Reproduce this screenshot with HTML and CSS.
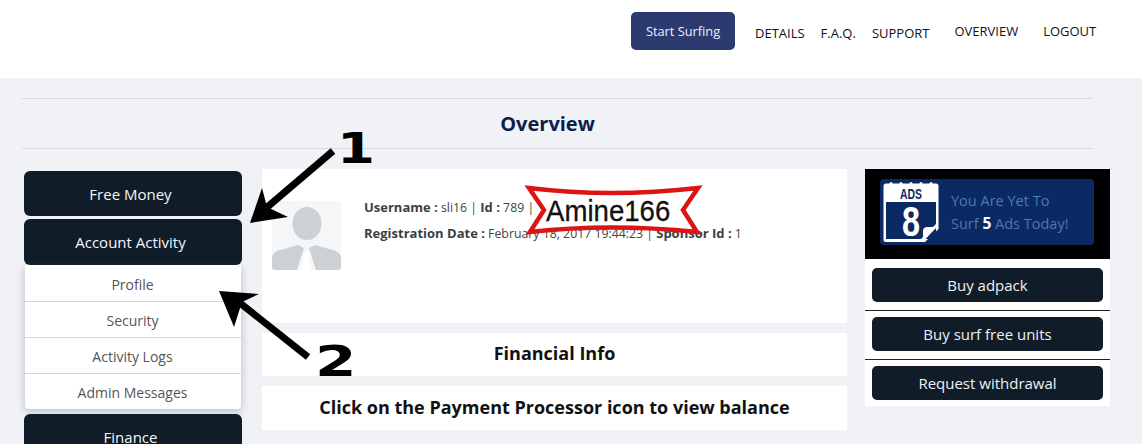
FILE: index.html
```html
<!DOCTYPE html>
<html lang="en">
<head>
<meta charset="utf-8">
<title>Overview</title>
<link rel="stylesheet" href="styles.css">
</head>
<body>
<header class="topbar">
  <a class="surf-btn">Start Surfing</a>
  <nav class="nav-low">
    <a class="nav-details">DETAILS</a>
    <a class="nav-faq">F.A.Q.</a>
    <a class="nav-support">SUPPORT</a>
  </nav>
  <nav class="nav-high">
    <a class="nav-overview">OVERVIEW</a>
    <a>LOGOUT</a>
  </nav>
</header>
<main class="page">
  <h1 class="title">Overview</h1>
  <div class="cols">
    <aside class="side">
      <a class="side-btn">Free Money</a>
      <a class="side-btn side-btn-open">Account Activity</a>
      <ul class="submenu">
        <li>Profile</li>
        <li>Security</li>
        <li>Activity Logs</li>
        <li>Admin Messages</li>
      </ul>
      <a class="side-btn side-btn-last">Finance</a>
    </aside>
    <section class="center">
      <div class="card profile">
        <svg class="avatar" viewBox="0 0 69 69" aria-hidden="true">
          <rect width="69" height="69" rx="3" fill="#f5f6f8"/>
          <ellipse cx="35" cy="22.500" rx="14.500" ry="16.500" fill="#cdd1d6"/>
          <path d="M0 57c0-3 2-5 5-7l21-6 6 3-7 22H3a3 3 0 0 1-3-3zM69 57c0-3-2-5-5-7l-21-6-6 3 7 22h22a3 3 0 0 0 3-3z" fill="#cdd1d6"/>
          <path d="M35 50l3 3-1 5 3 11H29l3-11-1-5z" fill="#fff"/>
        </svg>
        <div class="info">
          <p><b>Username :</b> sli16 | <b>Id :</b> 789 |</p>
          <p><b>Registration Date :</b> February 18, 2017 19:44:23 | <b>Sponsor Id :</b> 1</p>
        </div>
      </div>
      <div class="card band band-fin">Financial Info</div>
      <div class="card band band-click">Click on the Payment Processor icon to view balance</div>
    </section>
    <aside class="right">
      <div class="ad-box">
        <div class="ad-banner">
          <svg class="ad-icon" viewBox="0 0 56 60" aria-hidden="true">
            <path d="M3 1.500h50a2.500 2.500 0 0 1 2.500 2.500v43L42 60H3a2.500 2.500 0 0 1-2.500-2.500V4A2.500 2.500 0 0 1 3 1.500z" fill="#fff"/>
            <rect x="3" y="20" width="50" height="37" fill="#0b2a63"/>
            <path d="M53 45 40 60V50a4 4 0 0 1 4-5z" fill="#fff"/>
            <path d="M38 57h4l11-11v-4L38 57z" fill="#fff"/>
            <g fill="#fff"><circle cx="8" cy="1.500" r="1.500"/><circle cx="18" cy="1.500" r="1.500"/><circle cx="28" cy="1.500" r="1.500"/><circle cx="38" cy="1.500" r="1.500"/><circle cx="48" cy="1.500" r="1.500"/></g>
            <text x="17" y="17" class="ad-icon-top" textLength="22" lengthAdjust="spacingAndGlyphs">ADS</text>
            <text x="19" y="54" class="ad-icon-num" textLength="18" lengthAdjust="spacingAndGlyphs">8</text>
          </svg>
          <p class="ad-text">You Are Yet To<br>Surf <b>5</b> Ads Today!</p>
        </div>
      </div>
      <div class="action-panel">
        <div class="action"><a class="action-btn">Buy adpack</a></div>
        <div class="action"><a class="action-btn">Buy surf free units</a></div>
        <div class="action"><a class="action-btn">Request withdrawal</a></div>
      </div>
    </aside>
  </div>
</main>
<svg class="marks" viewBox="0 0 1142 444" aria-hidden="true">
  <path d="M333 151 265 209" stroke="#000" stroke-width="7" fill="none"/>
  <path d="M250 223 262 188 267 207 288 217z" fill="#000"/>
  <path d="M308 357 240 303" stroke="#000" stroke-width="7" fill="none"/>
  <path d="M219 291 259 294 242 302 234 327z" fill="#000"/>
  <path d="M529 188Q610 198 698 188L683 210 697 232Q610 223 530 232L544 210z" fill="#fff" stroke="#dc1414" stroke-width="4.500"/>
</svg>
<span class="mark-num mark-one">1</span>
<span class="mark-num mark-two">2</span>
<span class="stamp">Amine166</span>
</body>
</html>
```
FILE: styles.css
```css
* { box-sizing: border-box; }
html, body { margin: 0; height: 444px; overflow: hidden; }
body { position: relative; background: #f0f2f6; font-family: "Open Sans", "Liberation Sans", sans-serif; color: #333; }
a { display: block; }

.topbar { height: 78px; background: #fff; display: flex; align-items: flex-start; padding-left: 631px; }
.surf-btn { width: 104px; height: 38px; margin-top: 12px; background: #2b3b70; color: #eef; border-radius: 5px; font-size: 12.800px; line-height: 38px; text-align: center; }
.nav-low, .nav-high { display: flex; font-size: 13px; line-height: 17px; color: #111; }
.nav-low { margin: 25px 0 0 20px; }
.nav-faq { margin-left: 16px; }
.nav-support { margin-left: 16px; }
.nav-high { margin: 23px 0 0 25px; }
.nav-overview { margin-right: 25px; }

.page { padding: 20px 49px 0 22px; }
.title { margin: 0; height: 51px; padding-right: 20px; border-top: 1px solid #d8dbe2; border-bottom: 1px solid #d8dbe2; font-size: 20px; font-weight: 700; line-height: 50px; text-align: center; color: #0c1f4a; }
.cols { display: flex; padding: 20px 0 0 2px; align-items: flex-start; }

.side { width: 218px; flex: none; padding-top: 2px; }
.side-btn { height: 45px; margin-bottom: 3px; padding-right: 5px; background: #101d29; color: #f4f6f8; border-radius: 6px; font-size: 15px; line-height: 47px; text-align: center; }
.side-btn-open { height: 46px; margin-bottom: 0; }
.side-btn-last { margin: 5px 0 0; }
.submenu { list-style: none; margin: 0 1px; padding: 0; background: #fff; border-radius: 0 0 4px 4px; box-shadow: 0 2px 8px rgba(70, 80, 100, 0.350); }
.submenu li { height: 36px; padding-right: 1px; font-size: 14px; line-height: 38px; text-align: center; color: #555; border-top: 1px solid #d4d6da; }
.submenu li:first-child { border-top: 0; line-height: 40px; }

.center { width: 585px; margin-left: 20px; flex: none; }
.card { background: #fff; }
.profile { height: 154px; display: flex; padding: 32px 0 0 10px; }
.avatar { width: 69px; height: 69px; flex: none; }
.info { margin: -2px 0 0 23px; font-size: 12.300px; color: #444; }
.info p { margin: 0; line-height: 17px; margin-bottom: 9px; }
.info b { font-size: 13px; color: #3a3f46; }
.band { font-weight: 700; text-align: center; color: #111; }
.band-fin { height: 43px; margin-top: 10px; font-size: 18px; line-height: 41px; }
.band-click { height: 44px; margin-top: 10px; font-size: 18px; line-height: 43px; }

.right { width: 245px; margin-left: 18px; flex: none; }
.ad-box { height: 90px; background: #000; padding: 10px 16px 0 15px; }
.ad-banner { height: 66px; background: #0b2a63; border-radius: 4px; display: flex; align-items: center; padding-left: 3px; }
.ad-icon { width: 56px; height: 60px; flex: none; }
.ad-icon-top { font: 700 14px "Liberation Sans", sans-serif; fill: #0b2a63; }
.ad-icon-num { font: 700 42px "Liberation Sans", sans-serif; fill: #fff; }
.ad-text { margin: 1px 0 0 12px; font-size: 14.500px; line-height: 22px; color: #4a78b8; }
.ad-text b { font-size: 15.500px; color: #fff; }
.action-panel { height: 147px; background: #fff; padding-top: 2px; }
.action { height: 49px; padding: 6px 7px 0; border-top: 1px solid #222; }
.action:first-child { padding-top: 7px; border-top: 0; }
.action-btn { height: 34px; background: #101d29; color: #eef1f4; border-radius: 5px; font-size: 15px; line-height: 34px; text-align: center; }

.marks { position: absolute; left: 0; top: 0; width: 1142px; height: 444px; pointer-events: none; }
.mark-num { position: absolute; font-family: "DejaVu Sans", sans-serif; font-weight: 700; font-size: 42px; line-height: 42px; color: #000; transform-origin: left top; }
.mark-one { left: 337px; top: 128px; transform: scaleX(1.300); }
.mark-two { left: 315px; top: 341px; transform: scaleX(1.420); }
.stamp { position: absolute; left: 546px; top: 191px; font-family: "Liberation Sans", sans-serif; font-size: 30px; line-height: 40px; color: #111; -webkit-text-stroke: 0.300px #111; transform: scaleX(0.920); transform-origin: left top; }
```
